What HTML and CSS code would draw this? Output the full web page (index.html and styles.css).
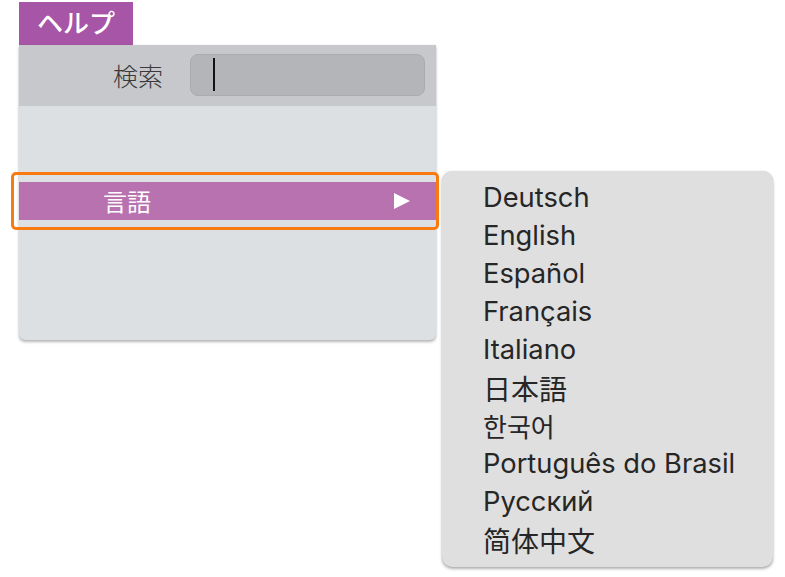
FILE: index.html
```html
<!DOCTYPE html>
<html lang="ja">
<head>
<meta charset="utf-8">
<link rel="stylesheet" href="styles.css">
</head>
<body>
<div class="page">
  <div class="tab">ヘルプ</div>
  <div class="menu">
    <div class="search-row">
      <span class="search-label">検索</span>
      <div class="search-input"><span class="caret"></span></div>
    </div>
    <div class="menu-body">
      <div class="item-wrap">
        <div class="item">
          <span class="item-label">言語</span>
          <svg class="arrow" width="18" height="18" viewBox="0 0 18 18"><polygon points="1,1 17,9 1,17" fill="#fff"/></svg>
        </div>
      </div>
    </div>
  </div>
  <div class="submenu">
    <div class="sub-item">Deutsch</div>
    <div class="sub-item">English</div>
    <div class="sub-item">Español</div>
    <div class="sub-item">Français</div>
    <div class="sub-item">Italiano</div>
    <div class="sub-item jp">日本語</div>
    <div class="sub-item kr">한국어</div>
    <div class="sub-item">Português do Brasil</div>
    <div class="sub-item">Русский</div>
    <div class="sub-item sc">简体中文</div>
  </div>
</div>
</body>
</html>
```
FILE: styles.css
```css
html, body {
  margin: 0;
  padding: 0;
  background: #ffffff;
}
body {
  font-family: Inter, "Noto Sans CJK JP", sans-serif;
  width: 785px;
  height: 577px;
  overflow: hidden;
}
.page {
  position: relative;
  width: 785px;
  height: 577px;
}
.tab {
  position: absolute;
  left: 19px;
  top: 2px;
  width: 114px;
  height: 43px;
  box-sizing: border-box;
  padding-left: 18px;
  background: #a755a6;
  color: #ffffff;
  font-family: "Noto Sans CJK JP", sans-serif;
  font-size: 26px;
  font-weight: 500;
  line-height: 40px;
}
.menu {
  position: absolute;
  left: 19px;
  top: 45px;
  width: 417px;
  height: 295px;
  border-radius: 0 0 6px 6px;
  background: #dde0e3;
  box-shadow: 0 2px 3px rgba(0,0,0,0.28), 0 0 1px rgba(0,0,0,0.2);
  display: flex;
  flex-direction: column;
}
.search-row {
  height: 61px;
  background: #c6c8cb;
  display: flex;
  align-items: center;
  box-sizing: border-box;
  padding-left: 94px;
  padding-bottom: 2px;
}
.search-label {
  font-family: "Noto Sans CJK JP", sans-serif;
  font-size: 25px;
  font-weight: 300;
  color: #3a3a3a;
  width: 50px;
}
.search-input {
  margin-left: 27px;
  width: 235px;
  height: 42px;
  box-sizing: border-box;
  background: #b3b5b8;
  border: 1px solid #aaadb0;
  border-radius: 8px;
  display: flex;
  align-items: center;
  padding-left: 22px;
}
.caret {
  width: 2px;
  height: 33px;
  background: #111;
}
.menu-body {
  flex: 1;
  padding-top: 69px;
}
.item-wrap {
  position: relative;
  padding: 7px 0;
}
.item-wrap::after {
  content: "";
  position: absolute;
  left: -8px;
  right: -3px;
  top: -3px;
  bottom: -3px;
  border: 3px solid #f97a10;
  border-radius: 5px;
}
.item {
  height: 38px;
  background: #b872b0;
  display: flex;
  align-items: center;
  padding-left: 84px;
  padding-right: 25px;
}
.item-label {
  flex: 1;
  color: #ffffff;
  font-family: "Noto Sans CJK JP", sans-serif;
  font-size: 24px;
  line-height: 38px;
}
.arrow {
  display: block;
}
.submenu {
  position: absolute;
  left: 442px;
  top: 171px;
  width: 331px;
  height: 396px;
  box-sizing: border-box;
  padding: 8px 0 8px 41px;
  background: #dfdfdf;
  border-radius: 10px;
  box-shadow: 0 2px 3px rgba(0,0,0,0.3), 0 0 1px rgba(0,0,0,0.2);
}
.sub-item {
  font-size: 27.3px;
  line-height: 38px;
  height: 38px;
  color: #262626;
  white-space: nowrap;
}
.sub-item.jp {
  font-family: "Noto Sans CJK JP", sans-serif;
  font-size: 28px;
}
.sub-item.kr {
  font-family: "Noto Sans CJK KR", sans-serif;
  font-size: 26px;
}
.sub-item.sc {
  font-family: "Noto Sans CJK SC", sans-serif;
  font-size: 28px;
}
```
